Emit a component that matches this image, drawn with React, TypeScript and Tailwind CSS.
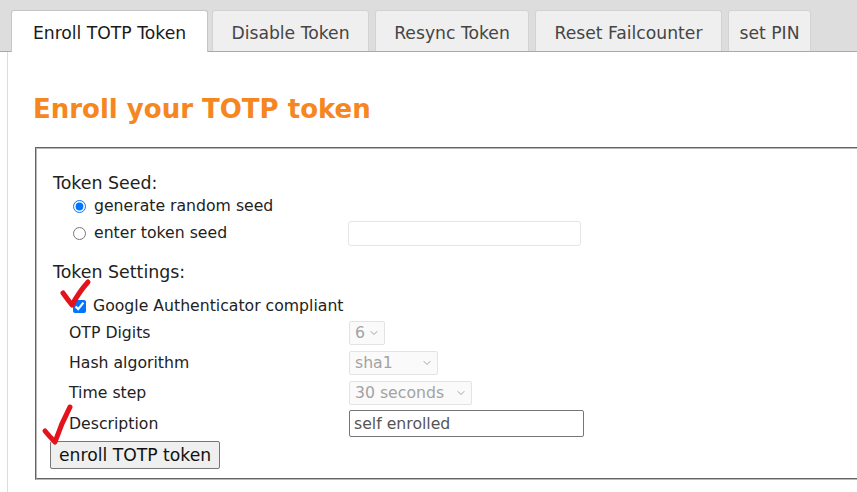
import { ChevronDown } from "lucide-react";

const tabs = [
  { label: "Enroll TOTP Token", cls: "w-[197px] ml-0", active: true },
  { label: "Disable Token", cls: "w-[157px] ml-[4px]" },
  { label: "Resync Token", cls: "w-[154px] ml-[6px]" },
  { label: "Reset Failcounter", cls: "w-[187px] ml-[6px]" },
  { label: "set PIN", cls: "w-[83px] ml-[6px]" },
];

function FakeSelect({ value, w }: { value: string; w: string }) {
  return (
    <div
      className={`${w} h-[24px] flex items-center justify-between pl-[5px] pr-[4px] border border-[#e3e3e3] rounded-[2px] bg-[#fafafa] text-[#a3a3a3]`}
    >
      <span>{value}</span>
      <ChevronDown size={12} strokeWidth={2} className="text-[#a3a3a3]" />
    </div>
  );
}

function SettingRow({ label, children, mt }: { label: string; children: React.ReactNode; mt: string }) {
  return (
    <div className={`flex items-center ${mt}`}>
      <span className="w-[296px] pl-[16px] shrink-0 text-[#222]">{label}</span>
      {children}
    </div>
  );
}

export default function App() {
  return (
    <div className="relative w-[857px] h-[492px] overflow-hidden bg-white font-['DejaVu_Sans','Verdana',sans-serif] text-[15.7px] text-[#222]">
      {/* tab strip */}
      <div className="h-[52px] bg-[#dddddd] border-b border-[#a9a9a9] flex items-end pl-[11px]">
        {tabs.map((t) => (
          <div
            key={t.label}
            className={`${t.cls} h-[41px] flex items-center justify-center pt-[5px] rounded-t-[3px] border border-b-0 text-[17.2px] ${
              t.active
                ? "bg-white border-[#c5c5c5] text-[#1a1a1a] h-[42px] -mb-px"
                : "bg-[#efefef] border-[#d3d3d3] text-[#454545]"
            }`}
          >
            {t.label}
          </div>
        ))}
      </div>

      {/* panel */}
      <div className="ml-[7px] border-l border-[#dddddd] h-[440px] pl-[27px] pt-[35px]">
        <h1 className="-ml-[2px] text-[26px] leading-[44px] font-bold text-[#f6861f]">Enroll your TOTP token</h1>

        <div className="mt-[16px] border-2 [border-style:groove] border-[#b8b8b8] border-r-0 h-[333px] pl-[16px] pt-[24px]">
          <div className="text-[17.4px] leading-[20px] h-[20px]">Token Seed:</div>
          <div className="mt-[3px] h-[20px] flex items-center pl-[20px]">
            <input type="radio" checked readOnly className="m-0 w-[13px] h-[13px] accent-[#0075ff]" />
            <span className="ml-[8px]">generate random seed</span>
          </div>
          <div className="mt-[4px] h-[26px] flex items-center pl-[20px]">
            <input type="radio" checked={false} readOnly className="m-0 w-[13px] h-[13px]" />
            <span className="ml-[8px] w-[254px]">enter token seed</span>
            <div className="w-[233px] h-[25px] border border-[#e5e5e5] rounded-[3px]" />
          </div>

          <div className="mt-[16px] text-[17.4px] leading-[20px] h-[20px]">Token Settings:</div>
          <div className="mt-[14px] h-[20px] flex items-center pl-[20px]">
            <input type="checkbox" checked readOnly className="m-0 w-[13px] h-[13px] accent-[#0075ff]" />
            <span className="ml-[7px]">Google Authenticator compliant</span>
          </div>

          <SettingRow label="OTP Digits" mt="mt-[5px]">
            <FakeSelect value="6" w="w-[36px]" />
          </SettingRow>
          <SettingRow label="Hash algorithm" mt="mt-[6px]">
            <FakeSelect value="sha1" w="w-[89px]" />
          </SettingRow>
          <SettingRow label="Time step" mt="mt-[6px]">
            <FakeSelect value="30 seconds" w="w-[123px]" />
          </SettingRow>
          <SettingRow label="Description" mt="mt-[5px]">
            <div className="w-[235px] h-[27px] flex items-center pl-[4px] border border-[#767676] rounded-[2px] text-[#555]">
              self enrolled
            </div>
          </SettingRow>

          <button className="mt-[4px] -ml-[3px] h-[28px] px-[8px] pt-[2px] border border-[#767676] rounded-[2px] bg-[#efefef] text-[#111] text-[17.2px] leading-none">
            enroll TOTP token
          </button>
        </div>
      </div>

      {/* hand-drawn red ticks */}
      <svg className="absolute left-0 top-0 pointer-events-none" width="857" height="492">
        <path d="M63 293 Q68 300 72 305 Q79 292 88 282" fill="none" stroke="#e3121b" strokeWidth="5" strokeLinecap="round" strokeLinejoin="round" />
        <path d="M45 431 Q50 437 55 442 Q61 424 70 407" fill="none" stroke="#e3121b" strokeWidth="5" strokeLinecap="round" strokeLinejoin="round" />
      </svg>
    </div>
  );
}
